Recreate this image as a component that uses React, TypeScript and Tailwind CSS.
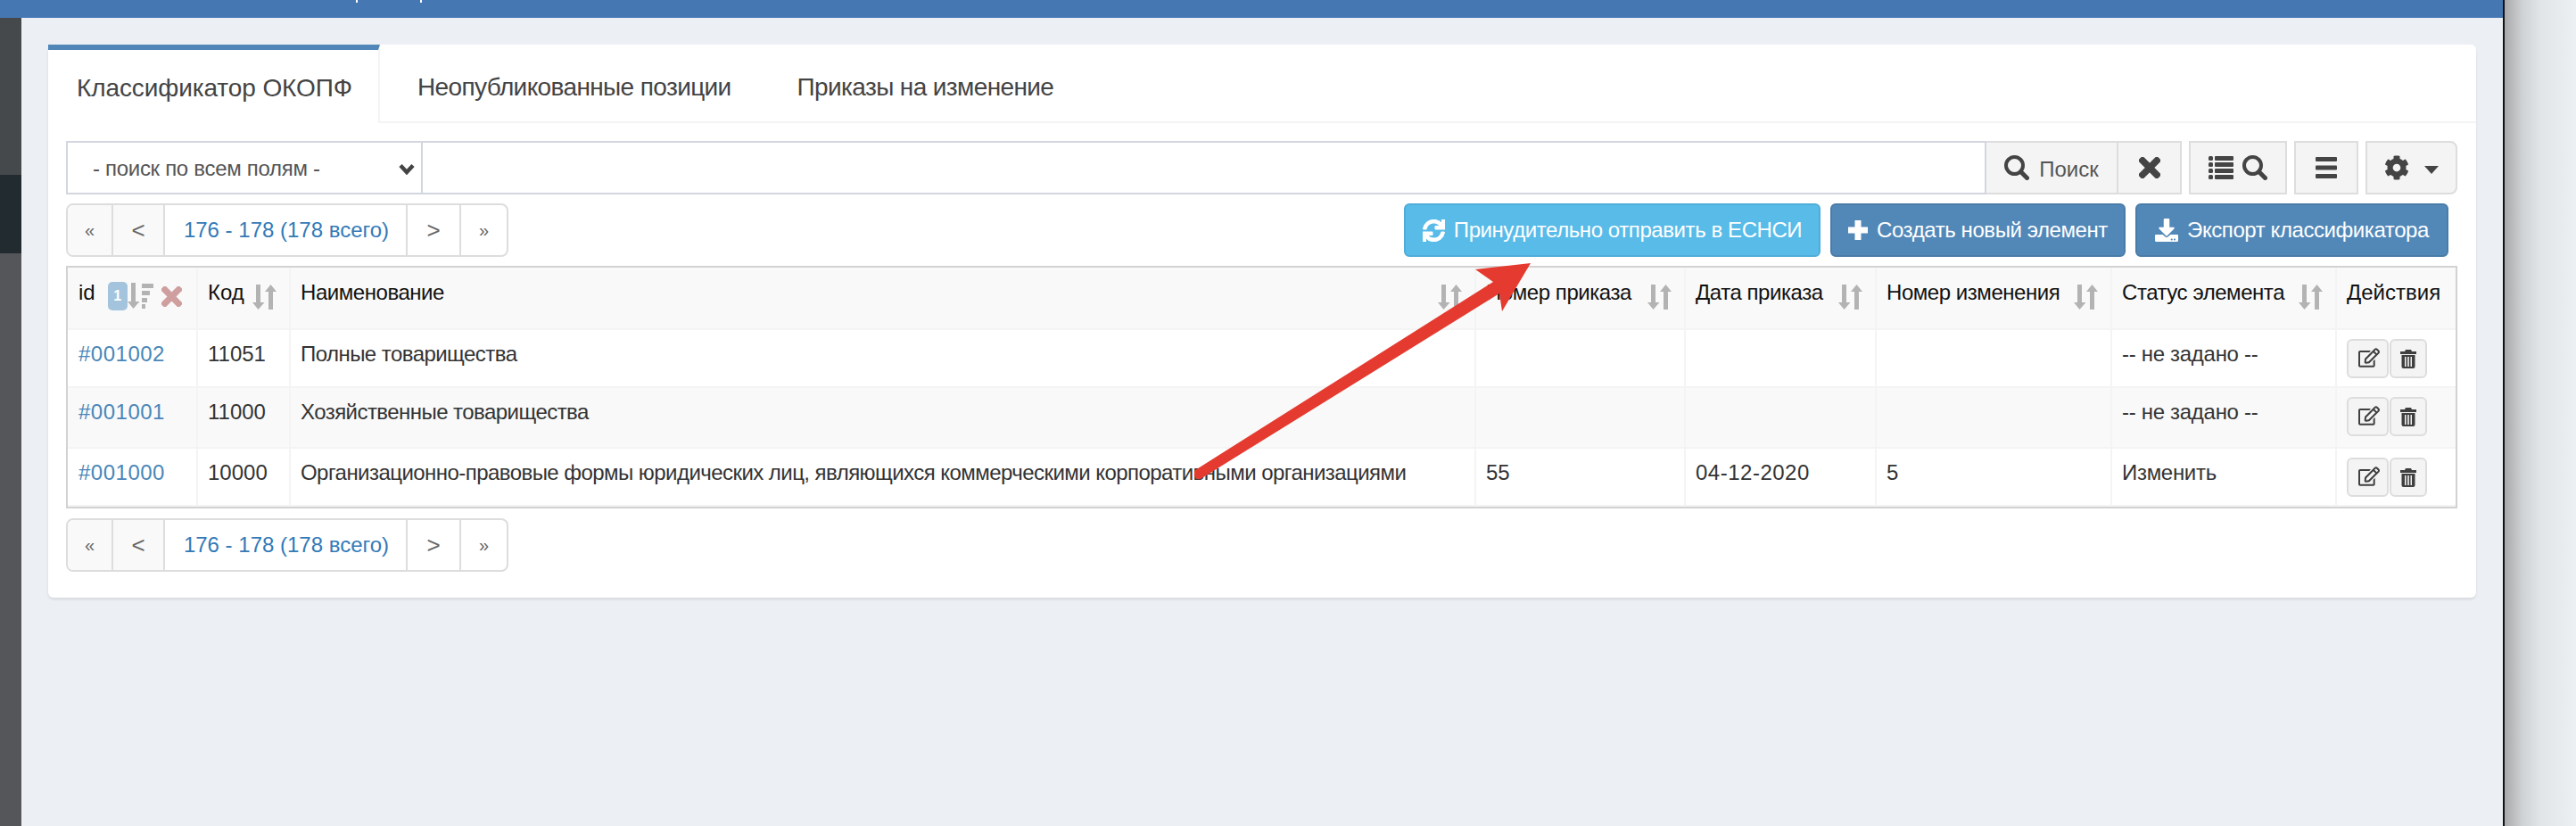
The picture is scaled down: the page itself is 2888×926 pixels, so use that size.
import React from "react";
import { FaSync, FaDownload, FaCog, FaRegEdit } from "react-icons/fa";

const SortIcon = () => (
  <svg width="27" height="28" viewBox="0 0 27 28" className="shrink-0 mt-[8px]" fill="#b3b3b3">
    <path d="M4 0h5v20h4.500L6.500 28 0 20h4z" />
    <path d="M18 28h5V8h4L20.500 0 14 8h4z" />
  </svg>
);

const SortOrderIcon = () => (
  <svg width="29" height="29" viewBox="0 0 29 29" fill="#b3b3b3" className="shrink-0">
    <path d="M4 0h5v21h4.500L6.500 29 0 21h4z" />
    <rect x="16" y="1" width="13" height="5" />
    <rect x="16" y="9" width="9" height="5" />
    <rect x="16" y="17" width="6" height="5" />
    <rect x="16" y="24" width="4" height="5" />
  </svg>
);

const XIcon = ({ size, color }: { size: number; color: string }) => (
  <svg width={size} height={size} viewBox="0 0 24 24" fill="none" className="shrink-0">
    <path d="M4 4L20 20M20 4L4 20" stroke={color} strokeWidth="7.500" strokeLinecap="square" />
  </svg>
);

const SearchIcon = () => (
  <svg width="28" height="28" viewBox="0 0 28 28" fill="none" className="shrink-0">
    <circle cx="11.500" cy="11.500" r="9.500" stroke="#444" strokeWidth="4" />
    <path d="M18.500 18.500L25.500 25.500" stroke="#444" strokeWidth="5" strokeLinecap="round" />
  </svg>
);

const ListIcon = () => (
  <svg width="28" height="26" viewBox="0 0 28 26" fill="#444" className="shrink-0">
    <rect x="0" y="0" width="5" height="5" rx="1.500" />
    <rect x="7" y="0" width="21" height="5" rx="1" />
    <rect x="0" y="7" width="5" height="5" rx="1.500" />
    <rect x="7" y="7" width="21" height="5" rx="1" />
    <rect x="0" y="14" width="5" height="5" rx="1.500" />
    <rect x="7" y="14" width="21" height="5" rx="1" />
    <rect x="0" y="21" width="5" height="5" rx="1.500" />
    <rect x="7" y="21" width="21" height="5" rx="1" />
  </svg>
);

const BarsIcon = () => (
  <svg width="24" height="24" viewBox="0 0 24 24" fill="#444">
    <rect x="0" y="0" width="24" height="5" rx="1" />
    <rect x="0" y="9.500" width="24" height="5" rx="1" />
    <rect x="0" y="19" width="24" height="5" rx="1" />
  </svg>
);

const PlusIcon = () => (
  <svg width="22" height="22" viewBox="0 0 22 22" fill="#fff" className="shrink-0">
    <path d="M7.500 0h7v7.500H22v7h-7.500V22h-7v-7.500H0v-7h7.500z" />
  </svg>
);

const TrashIcon = () => (
  <svg width="18" height="21" viewBox="0 0 18 21" fill="#3f3f3f">
    <path d="M6 0h6l1 2h5v3H0V2h5z" />
    <path d="M1.500 6h15v13a2 2 0 0 1-2 2h-11a2 2 0 0 1-2-2zM5 8v11h1.500V8zm3.200 0v11h1.600V8zm3.300 0v11H13V8z" fillRule="evenodd" />
  </svg>
);

const Pagination = () => {
  const cell = "flex items-center justify-center h-full border-r-2 border-[#ddd]";
  return (
    <div className="flex h-[60px] w-[496px] border-2 border-[#ddd] rounded-lg overflow-hidden text-[24px]">
      <div className={`${cell} w-[51px] bg-[#f9f9f9] text-[#666] text-[20px]`}>«</div>
      <div className={`${cell} w-[58px] bg-[#f9f9f9] text-[#666] text-[26px]`}>&lt;</div>
      <div className={`${cell} w-[272px] pl-[2px] text-[#337ab7]`}>176 - 178 (178 всего)</div>
      <div className={`${cell} w-[60px] text-[#666] text-[26px]`}>&gt;</div>
      <div className="flex items-center justify-center h-full flex-1 text-[#666] text-[20px]">»</div>
    </div>
  );
};

const ActionBtns = () => (
  <div className="flex">
    <button className="flex items-center justify-center w-[47px] h-[44px] bg-[#f4f4f4] border-2 border-[#ddd] rounded-md pl-[2px] pb-[3px] text-[#3f3f3f]">
      <FaRegEdit size={24} />
    </button>
    <button className="flex items-center justify-center w-[42px] h-[44px] ml-[1px] bg-[#f4f4f4] border-2 border-[#ddd] rounded-md">
      <TrashIcon />
    </button>
  </div>
);

const th = "border-2 border-[#f4f4f4] border-t-0 align-top pl-[11px] pt-[11px] pr-[14px] text-left font-normal text-[#111]";
const td = "border-2 border-[#f4f4f4] align-top pl-[11px] pt-[10px] pr-[10px]";

const rows = [
  { id: "#001002", code: "11051", name: "Полные товарищества", order: "", date: "", change: "", status: "-- не задано --", h: "h-[65px]", bg: "" },
  { id: "#001001", code: "11000", name: "Хозяйственные товарищества", order: "", date: "", change: "", status: "-- не задано --", h: "h-[68px]", bg: "bg-[#f9f9f9]" },
  { id: "#001000", code: "10000", name: "Организационно-правовые формы юридических лиц, являющихся коммерческими корпоративными организациями", order: "55", date: "04-12-2020", change: "5", status: "Изменить", h: "h-[65px]", bg: "" },
];

export default function App() {
  return (
    <div className="relative flex w-[2888px] h-[926px] overflow-hidden bg-[#ecf0f5] [font-family:'Liberation_Sans',Arial,sans-serif] text-[24px] leading-[34px] text-[#333]">
      <div className="flex flex-col w-[2806px] h-full shrink-0">
        <div className="flex h-[20px] shrink-0 bg-[#4578b3]">
          <span className="ml-[399px] w-[2px] h-[3px] bg-white" />
          <span className="ml-[70px] w-[2px] h-[3px] bg-white" />
        </div>
        <div className="flex flex-1 min-h-0">
          <div className="flex flex-col w-[24px] shrink-0">
            <div className="h-[176px] bg-[#45494b]" />
            <div className="h-[88px] bg-[#222b2f]" />
            <div className="flex-1 bg-[#54565a]" />
          </div>
          <div className="flex-1 pl-[30px] pt-[30px] pr-[30px]">
            <div className="h-[620px] bg-white rounded-md shadow-[0_2px_3px_rgba(0,0,0,0.1)]">
              <div className="flex h-[88px] border-b-2 border-[#f4f4f4] text-[28px] leading-[40px] text-[#444]">
                <div className="flex items-center w-[372px] h-[88px] pl-[32px] pt-[3px] border-t-[6px] border-t-[#5087b8] border-r-2 border-r-[#f4f4f4] bg-white tracking-[-0.1px]">
                  Классификатор ОКОПФ
                </div>
                <div className="flex items-center pl-[42px] pt-[9px] tracking-[-0.62px]">Неопубликованные позиции</div>
                <div className="flex items-center pl-[74px] pt-[9px] tracking-[-0.62px]">Приказы на изменение</div>
              </div>
              <div className="pl-[20px] pr-[21px] pt-[20px]">
                <div className="flex h-[60px]">
                  <div className="relative w-[400px] h-full shrink-0">
                    <select className="appearance-none w-full h-full border-2 border-[#d2d6de] bg-white pl-[28px] pt-[2px] text-[24px] tracking-[-0.3px] text-[#555] rounded-none outline-none">
                      <option>- поиск по всем полям -</option>
                    </select>
                    <svg width="18" height="13" viewBox="0 0 18 13" fill="none" className="absolute left-[373px] top-[25px]">
                      <path d="M2 2.500L9 10L16 2.500" stroke="#444" strokeWidth="4.500" />
                    </svg>
                  </div>
                  <input type="text" className="flex-1 min-w-0 h-full border-y-2 border-r-2 border-[#d2d6de] outline-none" />
                  <div className="flex items-center justify-center gap-[11px] w-[148px] h-full bg-[#f4f4f4] border-y-2 border-r-2 border-[#ddd] text-[#555]">
                    <SearchIcon />
                    <span className="pt-[4px]">Поиск</span>
                  </div>
                  <div className="flex items-center justify-center w-[71px] h-full bg-[#f4f4f4] border-y-2 border-r-2 border-[#ddd]">
                    <XIcon size={24} color="#444" />
                  </div>
                  <div className="flex items-center justify-center gap-[10px] w-[110px] h-full ml-[8px] bg-[#f4f4f4] border-2 border-[#ddd]">
                    <ListIcon />
                    <SearchIcon />
                  </div>
                  <div className="flex items-center justify-center w-[72px] h-full ml-[8px] bg-[#f4f4f4] border-2 border-[#ddd]">
                    <BarsIcon />
                  </div>
                  <div className="flex items-center justify-center gap-[17px] w-[103px] h-full ml-[8px] bg-[#f4f4f4] border-2 border-[#ddd] rounded-r-lg text-[#444]">
                    <FaCog size={28} />
                    <svg width="16" height="9" viewBox="0 0 16 9" fill="#444" className="mt-[4px]">
                      <path d="M0 0h16L8 9z" />
                    </svg>
                  </div>
                </div>
                <div className="flex justify-between h-[60px] mt-[10px] pr-[10px]">
                  <Pagination />
                  <div className="flex gap-[11px] text-white tracking-[-0.42px]">
                    <button className="flex items-center justify-center gap-[10px] w-[467px] h-[60px] bg-[#58bbe8] border-2 border-[#4fadd9] rounded-md">
                      <FaSync size={25} className="stroke-current stroke-[24]" />
                      Принудительно отправить в ЕСНСИ
                    </button>
                    <button className="flex items-center justify-center gap-[10px] w-[331px] h-[60px] bg-[#5288b8] border-2 border-[#4a7ca8] rounded-md">
                      <PlusIcon />
                      Создать новый элемент
                    </button>
                    <button className="flex items-center justify-center gap-[10px] w-[351px] h-[60px] bg-[#5288b8] border-2 border-[#4a7ca8] rounded-md">
                      <FaDownload size={26} />
                      Экспорт классификатора
                    </button>
                  </div>
                </div>
                <div className="mt-[10px] border-2 border-[#d2d2d2]">
                  <table className="w-[2677px] table-fixed border-collapse">
                    <colgroup>
                      <col className="w-[145px]" />
                      <col className="w-[104px]" />
                      <col className="w-[1329px]" />
                      <col className="w-[235px]" />
                      <col className="w-[214px]" />
                      <col className="w-[264px]" />
                      <col className="w-[252px]" />
                      <col className="w-[134px]" />
                    </colgroup>
                    <thead>
                      <tr className="h-[69px] bg-[#f9f9f9]">
                        <th className={`${th} border-l-0 !pl-[12px] !pr-0`}>
                          <div className="flex items-start">
                            <span>id</span>
                            <span className="flex items-center justify-center w-[22px] h-[32px] ml-[14px] mt-[5px] rounded-[5px] bg-[#a4c4dd] text-white text-[16px] font-bold">1</span>
                            <span className="mt-[6px]"><SortOrderIcon /></span>
                            <span className="mt-[10px] ml-[9px]"><XIcon size={23} color="#cf9e9e" /></span>
                          </div>
                        </th>
                        {["Код", "Наименование", "Номер приказа", "Дата приказа", "Номер изменения", "Статус элемента"].map((t) => (
                          <th key={t} className={th}>
                            <div className="flex items-start justify-between">
                              <span className={t === "Код" ? "whitespace-nowrap" : "whitespace-nowrap tracking-[-0.45px]"}>{t}</span>
                              <SortIcon />
                            </div>
                          </th>
                        ))}
                        <th className={`${th} border-r-0`}>Действия</th>
                      </tr>
                    </thead>
                    <tbody>
                      {rows.map((r) => (
                        <tr key={r.id} className={`${r.h} ${r.bg}`}>
                          <td className={`${td} border-l-0 !pl-[12px] text-[#4a86b8] tracking-[0.5px]`}>{r.id}</td>
                          <td className={`${td} text-[#333]`}>{r.code}</td>
                          <td className={`${td} text-[#333] whitespace-nowrap tracking-[-0.55px]`}>{r.name}</td>
                          <td className={`${td} text-[#333]`}>{r.order}</td>
                          <td className={`${td} text-[#333] tracking-[0.5px]`}>{r.date}</td>
                          <td className={`${td} text-[#333]`}>{r.change}</td>
                          <td className={`${td} text-[#333] tracking-[-0.3px]`}>{r.status}</td>
                          <td className={`${td} border-r-0`}><ActionBtns /></td>
                        </tr>
                      ))}
                    </tbody>
                  </table>
                </div>
                <div className="mt-[11px]">
                  <Pagination />
                </div>
              </div>
            </div>
          </div>
        </div>
      </div>
      <div className="w-[2px] h-full shrink-0 bg-[#111]" />
      <div className="flex-1 h-full bg-[linear-gradient(90deg,#a8a9aa_0%,#cfd2d4_25%,#e2e5e8_50%,#ecf0f3_100%)]" />
      <svg width="2888" height="926" viewBox="0 0 2888 926" className="absolute left-0 top-0 pointer-events-none">
        <path d="M1716 295L1654 302L1674 316L1340 527Q1337 534 1342 537Q1346 538 1349 535L1681 329L1684 349Z" fill="#e53a2f" />
      </svg>
    </div>
  );
}
